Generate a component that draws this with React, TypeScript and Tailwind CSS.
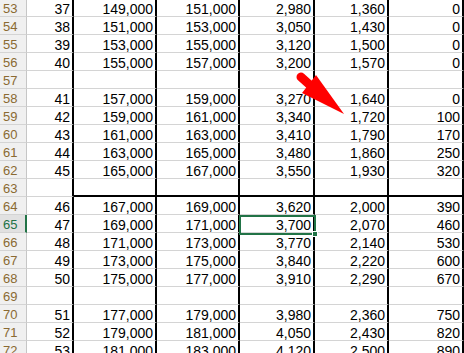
import React from "react";

type Row = { n: number; v?: string[] };

const rows: Row[] = [
  { n: 53, v: ["37", "149,000", "151,000", "2,980", "1,360", "0"] },
  { n: 54, v: ["38", "151,000", "153,000", "3,050", "1,430", "0"] },
  { n: 55, v: ["39", "153,000", "155,000", "3,120", "1,500", "0"] },
  { n: 56, v: ["40", "155,000", "157,000", "3,200", "1,570", "0"] },
  { n: 57 },
  { n: 58, v: ["41", "157,000", "159,000", "3,270", "1,640", "0"] },
  { n: 59, v: ["42", "159,000", "161,000", "3,340", "1,720", "100"] },
  { n: 60, v: ["43", "161,000", "163,000", "3,410", "1,790", "170"] },
  { n: 61, v: ["44", "163,000", "165,000", "3,480", "1,860", "250"] },
  { n: 62, v: ["45", "165,000", "167,000", "3,550", "1,930", "320"] },
  { n: 63 },
  { n: 64, v: ["46", "167,000", "169,000", "3,620", "2,000", "390"] },
  { n: 65, v: ["47", "169,000", "171,000", "3,700", "2,070", "460"] },
  { n: 66, v: ["48", "171,000", "173,000", "3,770", "2,140", "530"] },
  { n: 67, v: ["49", "173,000", "175,000", "3,840", "2,220", "600"] },
  { n: 68, v: ["50", "175,000", "177,000", "3,910", "2,290", "670"] },
  { n: 69 },
  { n: 70, v: ["51", "177,000", "179,000", "3,980", "2,360", "750"] },
  { n: 71, v: ["52", "179,000", "181,000", "4,050", "2,430", "820"] },
  { n: 72, v: ["53", "181,000", "183,000", "4,120", "2,500", "890"] },
];

// column widths incl. the 2px black right border
const widths = ["w-[47px]", "w-[83px]", "w-[83px]", "w-[75px]", "w-[74px]", "w-[75px]"];

const Cell = ({ w, text, thick, first }: { w: string; text?: string; thick?: boolean; first?: boolean }) => (
  <div
    className={`${w} shrink-0 h-[18px] border-r-2 border-r-black text-right pr-[2px] pt-[3px] leading-[14px] overflow-hidden ${
      thick && !first ? "border-b-2 border-b-black pt-[2px]" : "border-b border-b-[#d4d4d4]"
    }`}
  >
    {text}
  </div>
);

export default function App() {
  return (
    <div
      className="relative w-[464px] h-[353px] overflow-hidden bg-white text-[14px] text-black"
      style={{ fontFamily: '"Liberation Sans", Arial, sans-serif' }}
    >
      <div className="-mt-px">
        {rows.map((r) => {
          const sel = r.n === 65;
          const thick = r.n === 63;
          return (
            <div key={r.n} className="flex">
              <div
                className={`w-[27px] shrink-0 h-[18px] border-b border-b-[#d4d4d4] pl-[3px] pt-[3px] leading-[14px] text-[13px] ${
                  sel
                    ? "bg-[#e1e1e1] text-[#217346] border-r-2 border-r-[#217346]"
                    : "bg-[#f0f0f0] text-[#8a6a32] border-r border-r-[#c6c6c6]"
                }`}
              >
                {r.n}
              </div>
              {widths.map((w, i) => (
                <Cell key={i} w={w} text={r.v?.[i]} thick={thick} first={i === 0} />
              ))}
            </div>
          );
        })}
      </div>

      {/* active cell D65 */}
      <div className="absolute left-[239px] top-[215px] w-[77px] h-[20px] border-2 border-[#217346]" />
      <div className="absolute left-[312px] top-[231px] w-[6px] h-[6px] bg-[#217346] border border-white" />

      {/* red arrow */}
      <svg className="absolute left-0 top-0" width="464" height="353" viewBox="0 0 464 353">
        <line x1="301" y1="77" x2="311" y2="86" stroke="#ff0000" strokeWidth="9" strokeLinecap="round" />
        <polygon points="316,75 302,93 344,114" fill="#ff0000" />
      </svg>
    </div>
  );
}
